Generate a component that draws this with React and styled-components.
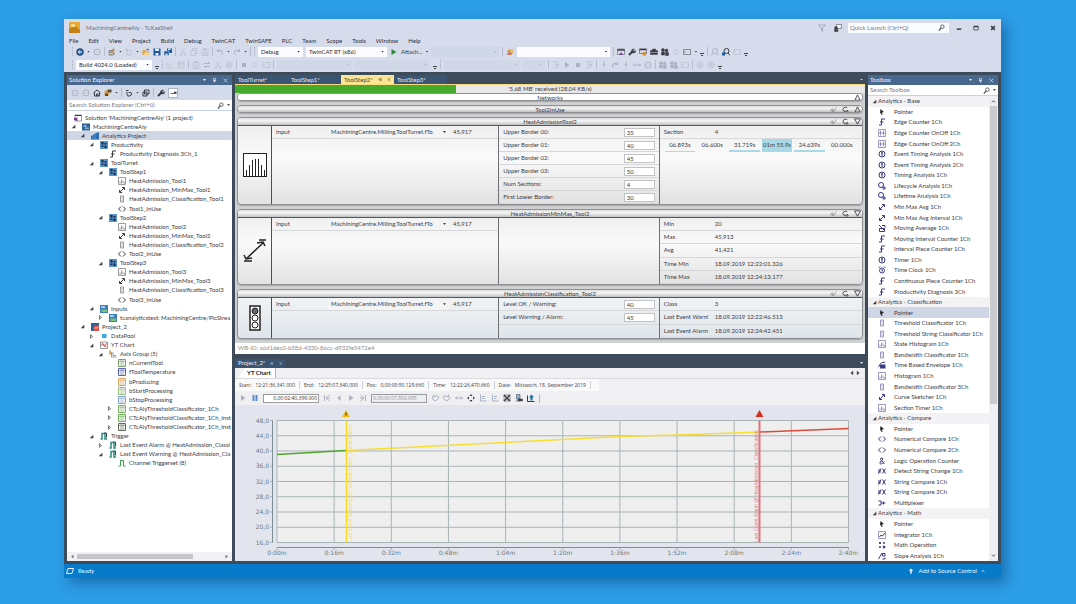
import React, { useState } from "react";
import styled, { createGlobalStyle } from "styled-components";

const GlobalStyle = createGlobalStyle`
  * {
    box-sizing: border-box;
  }

  body {
    margin: 0;
    background: #2c9de7;
    color: #3c3c44;
    font-family: Lato, "Segoe UI", sans-serif;
    font-size: 6px;
    line-height: 8px;
  }

  button, input, select {
    margin: 0;
    padding: 0;
    border: none;
    background: none;
    color: inherit;
    font: inherit;
  }

  input::placeholder {
    color: #77777f;
    opacity: 1;
  }
`;

const Page = styled.div`
  display: flex;
  min-height: 100vh;
  padding: 19px 75px 26px 64px;
`;

const Window = styled.div`
  flex: 1;
  min-width: 0;
  display: flex;
  flex-direction: column;
  background: #3e4b5b;
  box-shadow: 5px 5px 12px rgba(0, 40, 90, 0.4);
`;

const Header = styled.header`
  display: flex;
  flex-direction: column;
  background: #d6dceb;
  padding: 0 4px 1px;
`;

const TitleBar = styled.div`
  display: flex;
  align-items: center;
  gap: 6px;
  height: 17px;
  padding-left: 1px;
`;

const AppTitle = styled.h1`
  flex: 1;
  margin: 0;
  font-size: 6px;
  font-weight: 400;
  color: #6e7079;
`;

const TitleIcons = styled.div`
  display: flex;
  gap: 8px;
`;

const QuickLaunch = styled.label`
  display: flex;
  align-items: center;
  width: 101px;
  height: 10px;
  padding: 0 4px 0 2px;
  background: #fafbfd;
  color: #555;
`;

const BareInput = styled.input`
  flex: 1;
  min-width: 0;
  outline: none;
`;

const WindowButtons = styled.div`
  display: flex;
  gap: 9px;
`;

const Menu = styled.nav`
  display: flex;
  gap: 10px;
  height: 9px;
  align-items: center;
  padding-left: 1px;
`;

const MenuLink = styled.a`
  color: #2e2e36;
  text-decoration: none;
`;

const ToolRow = styled.div`
  display: flex;
  align-items: center;
  gap: 3px;
  height: 13px;
  padding-left: 4px;
`;

const ToolButton = styled.button`
  display: flex;
  align-items: center;
  justify-content: center;
  width: 8px;
  height: 10px;
  color: ${({ $off }) => ($off ? "#aab2c2" : "#3b3b44")};
`;

const BoxedButton = styled(ToolButton)`
  width: 10px;
  background: #fff;
  border: 1px solid #a9b4c9;
`;

const Caret = styled.span`
  flex: none;
  width: 3px;
  height: 2px;
  background: currentColor;
  clip-path: polygon(0 0, 100% 0, 50% 100%);
`;

const Separator = styled.span`
  width: 1px;
  height: 9px;
  background: #b5bccd;
`;

const Grip = styled.span`
  width: 1px;
  height: 9px;
  background: repeating-linear-gradient(#a3abbd 0 1px, transparent 1px 2px);
`;

const Overflow = styled.span`
  width: 4px;
  height: 3px;
  align-self: flex-end;
  margin-bottom: 2px;
  border-top: 1px solid #444;
  background: linear-gradient(#444, #444) center bottom / 2px 1px no-repeat;
`;

const SelectBox = styled.span`
  display: flex;
  align-items: center;
  width: ${({ $width }) => $width}px;
  height: 10px;
  padding: 0 3px;
  background: ${({ $off }) => ($off ? "#d0d8e7" : "#fcfcfe")};
  color: ${({ $off }) => ($off ? "#a9b0bf" : "#2e2e36")};
`;

const NativeSelect = styled.select`
  flex: 1;
  min-width: 0;
  appearance: none;
  outline: none;
`;

const Workspace = styled.div`
  flex: 1;
  display: grid;
  grid-template-columns: 165px minmax(0, 1fr) 130px;
  gap: 3px;
  padding: 3px;
`;

const Dock = styled.section`
  display: flex;
  flex-direction: column;
  min-width: 0;
  background: #fff;
`;

const DockTitle = styled.div`
  display: flex;
  align-items: center;
  gap: 6px;
  height: 10px;
  padding: 0 4px 0 2px;
  background: #49688e;
  color: #f2f5fa;
`;

const DockName = styled.h2`
  flex: 1;
  margin: 0;
  font-size: 6px;
  font-weight: 400;
`;

const DockTools = styled(ToolRow)`
  height: 15px;
  background: #d3dae9;
`;

const SearchBox = styled.label`
  display: flex;
  align-items: center;
  gap: 3px;
  height: 11px;
  padding: 0 2px;
  background: #fff;
  border-bottom: 1px solid #cbd3e2;
  color: #555;
`;

const Tree = styled.ul`
  display: grid;
  grid-auto-rows: 1fr;
  height: 355px;
  margin: 2px 0 0;
  padding: 0;
  list-style: none;
`;

const TreeItem = styled.li`
  display: flex;
  align-items: center;
  padding-left: ${({ $depth }) => ($depth ? $depth * 9 - 5 : 7)}px;
  background: ${({ $selected }) => ($selected ? "#cfd6e5" : "transparent")};
  white-space: nowrap;
`;

const Twisty = styled.span`
  display: flex;
  width: 11px;
  flex: none;
`;

const TreeIcon = styled.span`
  display: flex;
  flex: none;
  width: 8px;
  margin-right: 3px;
  color: ${({ $color }) => $color || "#3c3c44"};
`;

const HScroll = styled.div`
  display: flex;
  align-items: center;
  justify-content: space-between;
  gap: 2px;
  height: 9px;
  margin-top: auto;
  padding: 0 3px;
  background: #f2f2f4;
  color: #666;
`;

const HThumb = styled.span`
  width: 116px;
  height: 5px;
  margin-right: auto;
  background: #c6c7ca;
`;

const ToolboxBody = styled.div`
  flex: 1;
  display: flex;
`;

const ToolList = styled.ul`
  flex: 1;
  min-width: 0;
  display: grid;
  grid-auto-rows: 1fr;
  margin: 0;
  padding: 0;
  list-style: none;
`;

const ToolGroup = styled.li`
  display: flex;
  align-items: center;
  gap: 1px;
  padding-left: 4px;
  background: #f3f3f6;
`;

const ToolItem = styled.li`
  display: flex;
  align-items: center;
  gap: 8px;
  padding-left: 10px;
  background: ${({ $selected }) => ($selected ? "#cfd6e5" : "transparent")};
  white-space: nowrap;
`;

const VScroll = styled.div`
  display: flex;
  flex-direction: column;
  align-items: center;
  gap: 2px;
  width: 9px;
  padding: 3px 0;
  background: #f0f0f2;
  color: #555;
`;

const VThumb = styled.span`
  width: 7px;
  height: 298px;
  margin-bottom: auto;
  background: #cbcbce;
`;

const Center = styled.main`
  display: flex;
  flex-direction: column;
  min-width: 0;
`;

const Tabs = styled.div`
  display: flex;
  align-items: center;
  height: 10px;
  padding-right: 2px;
  border-bottom: ${({ $line }) => ($line ? "1px solid #f6dc7c" : "none")};
  color: #e6ebf2;
`;

const Tab = styled.button`
  display: flex;
  align-items: center;
  gap: 5px;
  width: ${({ $width }) => $width}px;
  height: 9px;
  padding: 0 3px;
  background: ${({ $active }) => ($active ? "#fbe696" : "#3b5472")};
  color: ${({ $active }) => ($active ? "#4d4630" : "#e6ebf2")};
`;

const Spacer = styled.span`
  flex: 1;
`;

const Editor = styled.div`
  background: #e3e4e6;
`;

const Progress = styled.div`
  display: grid;
  height: 8px;
  background: #e8e8e8;
  text-align: center;

  > * {
    grid-area: 1 / 1;
  }
`;

const ProgressFill = styled.span`
  background: #46ab2d;
`;

const Cards = styled.div`
  display: flex;
  flex-direction: column;
  gap: 4px;
  padding: 0 2px 4px;
  background: #d0d1d2;
`;

const Card = styled.section`
  border: 1px solid #8f9194;
  border-radius: 4px;
  background: ${({ $blue }) =>
    $blue
      ? "linear-gradient(#f4f6f8, #dfe5ea)"
      : "linear-gradient(#ececec, #fafafa 45%, #e2e2e2)"};
  box-shadow: 0 1px 1px #a5a6a8;
  overflow: hidden;
`;

const CardHead = styled.div`
  display: grid;
  grid-template-columns: 1fr auto 1fr;
  align-items: center;
  height: ${({ $open }) => ($open ? 8 : 6)}px;
  border-bottom: ${({ $open }) => ($open ? "1px solid #55575a" : "none")};
  background: ${({ $plain }) =>
    $plain ? "#fff" : "linear-gradient(#dcdcdc, #f6f6f6 40%, #bfc0c2)"};
  line-height: 6px;
`;

const CardName = styled.span`
  grid-column: 2;
`;

const CardActions = styled.span`
  display: flex;
  justify-content: flex-end;
  gap: 5px;
  padding-right: 1px;
`;

const CardBody = styled.div`
  display: grid;
  grid-template-columns: 34px minmax(0, 228fr) minmax(0, 161fr) minmax(0, 203fr);
  min-height: ${({ $height }) => $height}px;
`;

const IconCell = styled.div`
  display: flex;
  align-items: center;
  justify-content: center;
  border-right: 1px solid #4d4f52;
`;

const Column = styled.div`
  display: grid;
  grid-template-rows: repeat(${({ $rows }) => $rows}, 1fr);
  border-right: ${({ $last }) => ($last ? "none" : "1px solid #6d6f72")};
`;

const Row = styled.div`
  display: grid;
  grid-template-columns: ${({ $cols }) => $cols};
  align-items: center;
  padding: 0 4px;
  border-bottom: 1px solid #d6d7d9;
  white-space: nowrap;
`;

const LabelRow = styled(Row).attrs({ as: "label" })``;

const SourceSelect = styled.span`
  display: flex;
  align-items: center;
  gap: 2px;
  height: 11px;
  margin-right: 4px;
  padding: 0 3px;
  background: #f4f4f5;
`;

const NumberBox = styled.input`
  height: 9px;
  padding: 0 2px;
  border: 1px solid #c2c3c6;
  background: #fff;
  outline: none;
`;

const Timings = styled.div`
  display: grid;
  grid-template-columns: repeat(6, 1fr);
  align-items: stretch;
  padding: 0 4px;
  text-align: center;
`;

const Timing = styled.span`
  margin: 0 1px;
  line-height: 11px;
  border-bottom: ${({ $level }) => $level}px solid #a9d9e6;
  background: ${({ $full }) => ($full ? "#a9d9e6" : "transparent")};
`;

const WorkbenchId = styled.div`
  height: 11px;
  padding: 1px 3px;
  background: #fff;
  color: #8b8c92;
`;

const ChartDock = styled.section`
  display: flex;
  flex-direction: column;
  flex: 1;
  margin-top: 4px;
`;

const ChartPanel = styled.div`
  flex: 1;
  display: flex;
  flex-direction: column;
  background: #e2e5ed;
`;

const ChartTabs = styled.div`
  display: flex;
  align-items: center;
  height: 11px;
  padding: 0 4px;
  background: #f0f0f2;
  border-bottom: 1px solid #dadbe0;
`;

const ChartTab = styled.button`
  height: 10px;
  padding: 0 4px 0 8px;
  background: linear-gradient(125deg, transparent 5px, #fff 5px);
  border-right: 1px solid #b4b5ba;
  color: #222;
  font-weight: 700;
`;

const InfoBar = styled.dl`
  display: flex;
  align-self: flex-start;
  height: 12px;
  margin: 0;
  padding: 2px 4px;
  background: #fafafb;
  font-family: "Open Sans", sans-serif;
  font-size: 5px;
`;

const Info = styled.div`
  display: flex;
  gap: 4px;
  padding-right: 4px;
  margin-right: 4px;
  border-right: 1px solid #d0d1d6;

  dd {
    margin: 0;
  }
`;

const InfoArea = styled.div`
  display: flex;
  flex-direction: column;
  background: #f0f0f2;
`;

const PlayBar = styled(ToolRow)`
  gap: 4px;
  height: 14px;
`;

const TimeInput = styled.input`
  width: 56px;
  height: 9px;
  padding: 0 1px;
  border: 1px solid #9b9ca2;
  background: ${({ $off }) => ($off ? "#ededef" : "#fff")};
  color: ${({ $off }) => ($off ? "#98989e" : "#333")};
  font-family: "Open Sans", sans-serif;
  font-size: 5px;
  text-align: ${({ $off }) => ($off ? "left" : "right")};
`;

const ChartSvg = styled.svg`
  display: block;
  width: 100%;
  font-family: "DejaVu Sans", sans-serif;
  font-size: 6px;
`;

const StatusBar = styled.footer`
  display: flex;
  align-items: center;
  gap: 4px;
  height: 14px;
  padding: 0 16px 0 2px;
  background: #077bc9;
  color: #eaf4fc;
`;

const SourceControl = styled.button`
  display: flex;
  align-items: center;
  gap: 4px;
`;

const NAVY = "#3a3a86";
const BLUE = "#1b5a9e";

// every glyph is drawn on a 16 x 16 grid
const glyphs = {
  back: <><circle cx="8" cy="8" r="7" fill={BLUE} /><path d="M12 8H5M8 4.5L4.5 8L8 11.5" stroke="#fff" strokeWidth="2" fill="none" /></>,
  round: <><circle cx="8" cy="8" r="6" fill="none" strokeWidth="2" /><path d="M5 8h6" /></>,
  newProject: <><path d="M2 5h8v9H2zM2 8h8M6 5v9" fill="#f4e6c8" /><path d="M11 1v6M8 4h6" stroke="#c98a2b" strokeWidth="2" /><path d="M12 9v5" /></>,
  addItem: <><path d="M4 5h8v9H4z" fill="none" /><path d="M3 0v6M0 3h6" /></>,
  open: <><path d="M1 4h5l2 2h5v8H1z" fill="#dca64b" stroke="none" /><path d="M3 14l3-6h10l-3 6z" fill="#f2cf86" stroke="none" /><path d="M9 3q4-3 4 2" stroke={BLUE} strokeWidth="2" fill="none" /></>,
  save: <><path d="M1 1h14v14H1z" fill={BLUE} stroke="none" /><path d="M4 1h8v5H4zM5 10h6v5H5z" fill="#dfe7f3" stroke="none" /></>,
  saveAll: <><path d="M6 1h10v9H6z" fill={BLUE} stroke="none" /><path d="M8 1h5v3H8z" fill="#dfe7f3" stroke="none" /><path d="M0 6h10v9H0z" fill={BLUE} stroke="#d6dceb" /><path d="M3 11h4v4H3z" fill="#dfe7f3" stroke="none" /></>,
  cut: <><path d="M4 1l7 10M12 1L5 11" /><circle cx="4" cy="13" r="2" fill="none" /><circle cx="12" cy="13" r="2" fill="none" /></>,
  copy: <><path d="M5 1h9v10H5z" fill="none" /><path d="M2 5h9v10H2z" fill="#d6dceb" /></>,
  paste: <><path d="M2 3h12v12H2z" fill="none" /><path d="M6 1h4v3H6zM6 8h5v5H6z" /></>,
  undo: <path d="M3 2v5h5M3 7q5-5 9-1t-2 8" fill="none" strokeWidth="2" />,
  redo: <path d="M13 2v5H8M13 7q-5-5-9-1t2 8" fill="none" strokeWidth="2" />,
  play: <path d="M4 2l9 6l-9 6z" fill="currentColor" stroke="none" />,
  playGreen: <path d="M3 2l10 6l-10 6z" fill="#2f8a37" stroke="none" />,
  find: <><path d="M1 8l4-5h4l-1 6z" fill="#e2983a" stroke="none" /><path d="M8 2h7v7H8z" fill="#eebb62" stroke="none" /><path d="M2 14h9l3-5H5z" fill="#dc8d34" stroke="none" /><path d="M3 13l6-4" stroke="#9a6bb0" strokeWidth="3" /></>,
  winPurple: <><path d="M1 2h14v11H1z" fill="none" /><path d="M1 4h14" strokeWidth="3" /><path d="M4 14l4-6l4 6z" fill="#7b3f99" stroke="none" /></>,
  winOrange: <><path d="M1 2h14v9H1z" fill="none" /><path d="M1 3h14" strokeWidth="3" /><path d="M7 8h7v7H7z" fill="#de8f30" stroke="none" /></>,
  wrench: <><path d="M2 14l7-7" strokeWidth="4" /><path d="M13 2l-3 3l2 2l3-2q1 5-4 5t-4-5q1-4 6-3z" fill="currentColor" /></>,
  toolbox: <><path d="M1 5h14v8H1zM5 5V2h6v3" fill="currentColor" /><path d="M1 9h14" stroke="#d6dceb" /></>,
  team: <><circle cx="4" cy="4" r="3" fill="currentColor" /><circle cx="11" cy="5" r="3" fill="currentColor" /><path d="M1 14V8h6v6zM9 15V9h6v6z" fill="currentColor" /></>,
  frame: <><path d="M1 3h14v10H1z" fill="none" /><path d="M4 6v4" /></>,
  dots: <path d="M2 8h2M7 8h2M12 8h2M4 4h8M4 12h8" />,
  lens: <><circle cx="8" cy="6" r="5" fill="none" strokeWidth="2" /><path d="M4 10l-3 5M11 10l4 5" strokeWidth="2" /></>,
  lensBlue: <><circle cx="9" cy="6" r="5" fill="none" strokeWidth="2" /><path d="M12 10l4 5M6 9l-2 3" strokeWidth="2" /><path d="M0 9h6v6H0z" fill={BLUE} stroke="none" /></>,
  grid: <path d="M2 2h12v12H2zM2 6h12M6 2v12" fill="none" />,
  lines: <path d="M2 2v12h12M5 11l8-8M5 5l4 4" fill="none" />,
  swap: <path d="M2 5h11l-3-3M14 11H3l3 3" fill="none" strokeWidth="2" />,
  globe: <><circle cx="8" cy="8" r="6" fill="none" /><path d="M2 8h12M8 2v12" /></>,
  step: <path d="M1 2h9v12H1M5 8h9M11 5l3 3l-3 3" fill="none" />,
  stop: <path d="M4 4h8v8H4z" fill="currentColor" stroke="none" />,
  down: <path d="M8 1v9M5 7l3 3l3-3M7 14h2" fill="none" strokeWidth="2" />,
  magnify: <><circle cx="10" cy="6" r="4" fill="none" strokeWidth="2" /><path d="M7 9l-5 6" strokeWidth="3" /></>,
  filter: <path d="M1 2h14L9 9v6l-2-2V9z" fill="none" />,
  feedback: <><path d="M5 1h10v8H5z" fill="#eef1f7" /><circle cx="4" cy="8" r="3" fill="currentColor" /><path d="M1 15v-4h7v4z" fill="currentColor" /></>,
  min: <path d="M2 11h12" strokeWidth="4" />,
  max: <><path d="M2 4h12v9H2z" fill="none" strokeWidth="2" /><path d="M2 4h12" strokeWidth="4" /></>,
  close: <path d="M2 2l12 12M14 2L2 14" strokeWidth="2" />,
  closeBold: <path d="M3 3l10 10M13 3L3 13" strokeWidth="4" />,
  pin: <path d="M5 1h6v8H5zM3 9h10M8 9v6" fill="none" strokeWidth="2" />,
  tabPin: <path d="M1 8h6M7 4v8h6V4z" fill="none" strokeWidth="2" />,
  home: <path d="M1 8l7-6l7 6M3 7v7h10V7M7 14v-4h3v4" fill="none" strokeWidth="2" />,
  folders: <><path d="M1 3h9v10H1z" fill="#dda64a" stroke="none" /><path d="M7 1h8v6H7zM2 9h6v5H2z" fill="#5a4a3a" stroke="none" /></>,
  sync: <path d="M2 3h5M4 6v5q0 4 5 3t4-6q-3-3-6 0" fill="none" strokeWidth="2" />,
  stack: <path d="M5 2h9v8H5zM2 6h8v8H2z" fill="none" strokeWidth="2" />,
  bar: <path d="M1 9h8V6h6v5H1z" fill="currentColor" stroke="none" />,
  open4: <path d="M11 2v10H1z" fill="currentColor" stroke="none" />,
  closed4: <path d="M3 2l6 5l-6 5z" fill="none" strokeWidth="2" />,
  solution: <><path d="M2 2h13v12H2z" fill="#fff" /><path d="M2 3h13" strokeWidth="2" /><path d="M0 8l7-1v7l-7-2z" fill="#7b3f99" stroke="none" /></>,
  machine: <><path d="M0 1h16v14H0z" fill="#2e5f96" stroke="none" /><path d="M3 4h6v4H3zM6 9h8v3H6z" fill="#8fb4d6" stroke="none" /></>,
  analytics: <><path d="M0 15V8l4-2l4-3l8-3v15z" fill="#2a6fb8" stroke="none" /><path d="M4 6v9M8 4v11" stroke="#7fb0dd" /></>,
  module: <><path d="M0 0h16v16H0z" fill="#5a94c9" stroke="none" /><path d="M3 2h4v5H3zM9 4h4v3H9zM3 9h4v3H3zM9 9h4v5H9z" fill="#14284a" stroke="none" /></>,
  inputs: <><path d="M0 0h16v16H0z" fill="#3c7fc0" stroke="none" /><path d="M3 9h11v5H3z" fill="#7fc46a" stroke="none" /><path d="M2 2h8v4H2z" fill="#a8cbe6" stroke="none" /></>,
  edge: <path d="M2 14h5V2h7M4 8h7" fill="none" strokeWidth="2" />,
  hist: <><path d="M1 1h14v14H1z" fill="none" /><path d="M4 13V9M7 13V5M10 13V7M13 13v-3" /></>,
  minmax: <path d="M4 12L12 4M8 3h5v5M3 8v5h5" fill="none" strokeWidth="2" />,
  lamp: <path d="M5 2h6v12H5zM7 5h2M7 8h2M7 11h2" fill="none" />,
  compare: <path d="M6 3L1 8l5 5M10 3l5 5l-5 5" fill="none" strokeWidth="2" />,
  project2: <><path d="M0 0h16v16H0z" fill="#2e5f96" stroke="none" /><path d="M5 5h11v11H5z" fill="#d9534a" stroke="none" /><path d="M7 12l3-4l2 3l3-4" stroke="#fff" fill="none" /></>,
  pool: <path d="M4 4h9v8H4z" fill="#35a9e0" stroke="none" />,
  ytChart: <><path d="M1 2h14v13H1z" fill="#fff" /><path d="M1 10l4-4l4 5l5-7M3 3l10 9" stroke="#d9534a" fill="none" strokeWidth="2" /></>,
  axis: <><path d="M5 4v10h10M8 4v7h6" fill="none" /><path d="M2 1v8" stroke="#e08a3a" strokeWidth="3" /></>,
  channel: <><path d="M1 1h14v14H1z" fill="#eef1ee" strokeWidth="2" /><path d="M1 5h14M6 2v12M10 2v12" /></>,
  trigger: <><path d="M1 14h3V3h6v11h4" fill="none" stroke="#2b8f7f" strokeWidth="3" /><path d="M8 2h5v9" fill="none" stroke="#3b4a5e" strokeWidth="2" /></>,
  pulse: <path d="M1 14h4V3h6v11h4" fill="none" stroke="#35a545" strokeWidth="2" />,
  pointer: <path d="M5 2l7 6l-4 1l1 5l-2 0l-1-4l-2 1z" fill="#222" stroke="none" />,
  onoff: <><path d="M1 1h14v14H1z" fill="none" /><path d="M5 3v10M11 3v10M2 8h12" /></>,
  clock: <><circle cx="8" cy="8" r="6" fill="none" strokeWidth="2" /><path d="M8 4v8M6 6h4" strokeWidth="2" /></>,
  cycle: <><circle cx="6" cy="6" r="5" fill="none" strokeWidth="2" /><path d="M10 10h4v4h-4z" fill="none" strokeWidth="2" /></>,
  moving: <><path d="M2 2l12 12M3 9v6h10V9z" fill="none" strokeWidth="2" /><path d="M8 3h6v4" fill="none" strokeWidth="2" /></>,
  alarmClock: <><circle cx="8" cy="9" r="5" fill="none" strokeWidth="2" /><path d="M1 4l3-3M15 4l-3-3M8 6v4h2" strokeWidth="2" /></>,
  envelope: <><path d="M4 7h11v8H4z" fill="currentColor" stroke="none" /><path d="M1 12Q6 0 14 3" fill="none" strokeWidth="2" /></>,
  amp: <path d="M13 14L5 5q0-4 3-3t0 5q-6 3-4 6t9-4" fill="none" strokeWidth="2" />,
  notEqual: <path d="M0 6h6M0 10h6M1 13L6 3M9 3l6 10M15 3L9 13" fill="none" strokeWidth="2" />,
  mux: <path d="M1 4h5v8H1M6 8h9M11 5v6" fill="none" strokeWidth="2" />,
  integ: <><path d="M1 1h14v14H1z" fill="none" /><path d="M3 12l3-4l3 2l5-6" fill="none" strokeWidth="2" /></>,
  math: <path d="M2 4h4M4 2v4M10 4h4M2 12h4M10 10l4 4M14 10l-4 4" strokeWidth="3" />,
  slope: <path d="M1 14L8 2M9 3h5v5H9zM9 14h5v-3" fill="none" strokeWidth="2" />,
  pen: <path d="M1 12q2-6 5-6t-1 6h4L15 3" fill="none" />,
  reset: <path d="M12 4Q8 1 4 4t0 8h7v3l3-3l-3-3" fill="none" strokeWidth="2" />,
  triUp: <path d="M2 14L8 2l6 12z" fill="none" strokeWidth="2" />,
  triDown: <path d="M1 2l7 12l7-12z" fill="none" strokeWidth="2" />,
  pause: <path d="M3 2h4v12H3zM9 2h4v12H9z" fill="#5b86d0" stroke="none" />,
  first: <path d="M3 2v12M13 2L6 8l7 6M8 8h6" fill="none" strokeWidth="2" />,
  prev: <path d="M11 2L5 8l6 6z" fill="currentColor" stroke="none" />,
  last: <path d="M13 2v12M3 2l7 6l-7 6M2 8h6" fill="none" strokeWidth="2" />,
  ccw: <path d="M5 3q-5 5 0 9t9-2t-4-8M5 1v4h5" fill="none" strokeWidth="2" />,
  cw: <path d="M11 3q5 5 0 9T2 10t4-8M11 1v4H6" fill="none" strokeWidth="2" />,
  hfit: <path d="M1 8h14M4 5L1 8l3 3M12 5l3 3l-3 3" fill="none" strokeWidth="2" />,
  move: <path d="M8 0l3 4H5zM8 16l3-4H5zM0 8l4-3v6zM16 8l-4-3v6z" fill="currentColor" stroke="none" />,
  axisFit: <path d="M3 1v13h12M6 5h6M6 9h5" fill="none" strokeWidth="2" />,
  crossFit: <><path d="M2 2h12v12H2z" fill="none" /><path d="M2 2l12 12M14 2L2 14" strokeWidth="3" /></>,
  report: <><path d="M3 1h7v9H3z" fill="#8db8dd" /><path d="M6 10h9v4H6z" fill="currentColor" /><path d="M1 14h8" /></>,
  exportUp: <><path d="M1 3v12h14" fill="none" strokeWidth="2" /><path d="M7 13V7H4l5-6l5 6h-3v6z" fill="#1d6f99" stroke="none" /></>,
  arrowUp: <path d="M8 1l6 6h-4v8H6V7H2z" fill="currentColor" stroke="none" />,
  flag: <path d="M4 3h11l-3 10H1z" fill="none" strokeWidth="2" />,
  scrollL: <path d="M11 2L4 8l7 6z" fill="currentColor" stroke="none" />,
  scrollR: <path d="M5 2l7 6l-7 6z" fill="currentColor" stroke="none" />,
  scrollU: <path d="M3 11l5-6l5 6" fill="none" strokeWidth="3" />,
  scrollD: <path d="M3 5l5 6l5-6" fill="none" strokeWidth="3" />,
};

const Icon = ({ name, size = 8, color }) => (
  <svg
    width={size}
    height={size}
    viewBox={name.endsWith("4") ? "0 0 12 14" : "0 0 16 16"}
    stroke="currentColor"
    fill="none"
    color={color}
    aria-hidden="true"
  >
    {glyphs[name]}
  </svg>
);

// "|" is a separator, ":" a grip, "v" a drop-down caret, "..." the overflow mark
const Tools = ({ items, off }) =>
  items.split(" ").map((item, i) => {
    if (item === "|") return <Separator key={i} />;
    if (item === ":") return <Grip key={i} />;
    if (item === "v") return <Caret key={i} />;
    if (item === "...") return <Overflow key={i} />;
    return (
      <ToolButton key={i} type="button" aria-label={item} $off={off}>
        <Icon name={item} />
      </ToolButton>
    );
  });

const ToolSelect = ({ label, value, width, off }) => (
  <SelectBox $width={width} $off={off}>
    <NativeSelect aria-label={label} disabled={off} defaultValue={value}>
      <option>{value}</option>
    </NativeSelect>
    <Caret />
  </SelectBox>
);

const menu = ["File", "Edit", "View", "Project", "Build", "Debug", "TwinCAT", "TwinSAFE", "PLC", "Team", "Scope", "Tools", "Window", "Help"];

const toolStep = (n) => [
  [4, "open", "module", `ToolStep${n}`],
  [5, "", "hist", `HeatAdmission_Tool${n}`],
  [5, "", "minmax", `HeatAdmission_MinMax_Tool${n}`],
  [5, "", "lamp", `HeatAdmission_Classification_Tool${n}`],
  [5, "", "compare", `Tool${n}_InUse`],
];

const tree = [
  [0, "", "solution", "Solution 'MachiningCentreAly' (1 project)"],
  [1, "open", "machine", "MachiningCentreAly"],
  [2, "open", "analytics", "Analytics Project"],
  [3, "open", "module", "Productivity"],
  [4, "", "edge", "Productivity Diagnosis 3Ch_1"],
  [3, "open", "module", "ToolTurret"],
  ...toolStep(1),
  ...toolStep(2),
  ...toolStep(3),
  [3, "open", "inputs", "Inputs"],
  [4, "closed", "inputs", "tcanalyticstest: MachiningCentre/PlcStrea"],
  [2, "open", "project2", "Project_2"],
  [3, "closed", "pool", "DataPool"],
  [3, "open", "ytChart", "YT Chart"],
  [4, "open", "axis", "Axis Group (5)"],
  [5, "", "channel", "nCurrentTool", "#7fa06a"],
  [5, "", "channel", "fToolTemperature", "#5664a8"],
  [5, "", "channel", "bProducing", "#dda760"],
  [5, "", "channel", "bStartProcessing", "#9bbf7c"],
  [5, "", "channel", "bStopProcessing", "#86a8d6"],
  [5, "closed", "channel", "CTcAlyThresholdClassificator_1Ch", "#7fb06a"],
  [5, "closed", "channel", "CTcAlyThresholdClassificator_1Ch_Inst", "#6fae55"],
  [5, "closed", "channel", "CTcAlyThresholdClassificator_1Ch_Inst", "#5d6b58"],
  [3, "open", "trigger", "Trigger"],
  [4, "closed", "trigger", "Last Event Alarm @ HeatAdmission_Classi"],
  [4, "open", "trigger", "Last Event Warning @ HeatAdmission_Cla"],
  [5, "", "pulse", "Channel Triggerset (8)"],
];

const toolbox = [
  ["Analytics - Base", [
    ["pointer", "Pointer"],
    ["edge", "Edge Counter 1Ch"],
    ["onoff", "Edge Counter OnOff 1Ch"],
    ["onoff", "Edge Counter OnOff 2Ch"],
    ["clock", "Event Timing Analysis 1Ch"],
    ["clock", "Event Timing Analysis 2Ch"],
    ["clock", "Timing Analysis 1Ch"],
    ["cycle", "Lifecycle Analysis 1Ch"],
    ["cycle", "Lifetime Analysis 1Ch"],
    ["minmax", "Min Max Avg 1Ch"],
    ["minmax", "Min Max Avg Interval 1Ch"],
    ["moving", "Moving Average 1Ch"],
    ["edge", "Moving Interval Counter 1Ch"],
    ["edge", "Interval Piece Counter 1Ch"],
    ["clock", "Timer 1Ch"],
    ["alarmClock", "Time Clock 1Ch"],
    ["edge", "Continuous Piece Counter 1Ch"],
    ["edge", "Productivity Diagnosis 3Ch"],
  ]],
  ["Analytics - Classification", [
    ["pointer", "Pointer", true],
    ["lamp", "Threshold Classificator 1Ch"],
    ["lamp", "Threshold String Classificator 1Ch"],
    ["hist", "State Histogram 1Ch"],
    ["lamp", "Bandwidth Classificator 1Ch"],
    ["envelope", "Time Based Envelope 1Ch"],
    ["hist", "Histogram 1Ch"],
    ["lamp", "Bandwidth Classificator 3Ch"],
    ["minmax", "Curve Sketcher 1Ch"],
    ["hist", "Section Timer 1Ch"],
  ]],
  ["Analytics - Compare", [
    ["pointer", "Pointer"],
    ["compare", "Numerical Compare 1Ch"],
    ["compare", "Numerical Compare 2Ch"],
    ["amp", "Logic Operation Counter"],
    ["notEqual", "Detect String Change 1Ch"],
    ["notEqual", "String Compare 1Ch"],
    ["notEqual", "String Compare 2Ch"],
    ["mux", "Multiplexer"],
  ]],
  ["Analytics - Math", [
    ["pointer", "Pointer"],
    ["integ", "Integrator 1Ch"],
    ["math", "Math Operation"],
    ["slope", "Slope Analysis 1Ch"],
  ]],
];

const timings = [
  ["06.893s", 1],
  ["06.600s", 0],
  ["31.719s", 2],
  ["01m 55.9s", 2, true],
  ["24.639s", 2],
  ["00.000s", 0],
];

const info = [
  ["Start:", "12:21:36,341.000"],
  ["End:", "12:25:07,340.000"],
  ["Pos:", "0,00:00:50.129.660"],
  ["Time:", "12:22:26,470.660"],
  ["Date:", "Mittwoch, 18. September 2019"],
];

const DockHeader = ({ title }) => (
  <DockTitle>
    <DockName>{title}</DockName>
    <Caret />
    <Icon name="pin" size={5} />
    <Icon name="close" size={5} />
  </DockTitle>
);

const Search = ({ text }) => (
  <SearchBox>
    <BareInput type="search" placeholder={text} aria-label={text} />
    <Icon name="magnify" size={7} />
    <Caret />
  </SearchBox>
);

const SolutionExplorer = () => (
  <Dock>
    <DockHeader title="Solution Explorer" />
    <DockTools>
      <Tools items="round round" off />
      <Tools items="home folders v | sync v stack | wrench" />
      <BoxedButton type="button" aria-label="Preview">
        <Icon name="bar" size={7} />
      </BoxedButton>
    </DockTools>
    <Search text="Search Solution Explorer (Ctrl+ü)" />
    <Tree>
      {tree.map(([depth, state, icon, text, color], i) => (
        <TreeItem key={i} $depth={depth} $selected={i === 2}>
          {depth > 0 && (
            <Twisty>{state && <Icon name={`${state}4`} size={5} />}</Twisty>
          )}
          <TreeIcon $color={color}>
            <Icon name={icon} />
          </TreeIcon>
          {text}
        </TreeItem>
      ))}
    </Tree>
    <HScroll>
      <Icon name="scrollL" size={5} />
      <HThumb />
      <Icon name="scrollR" size={5} />
    </HScroll>
  </Dock>
);

const Toolbox = () => (
  <Dock>
    <DockHeader title="Toolbox" />
    <Search text="Search Toolbox" />
    <ToolboxBody>
      <ToolList>
        {toolbox.map(([group, items]) => (
          <React.Fragment key={group}>
            <ToolGroup>
              <Icon name="open4" size={5} />
              {group}
            </ToolGroup>
            {items.map(([icon, text, selected]) => (
              <ToolItem key={text} $selected={selected}>
                <Icon name={icon} color={NAVY} />
                {text}
              </ToolItem>
            ))}
          </React.Fragment>
        ))}
      </ToolList>
      <VScroll>
        <Icon name="scrollU" size={5} />
        <VThumb />
        <Icon name="scrollD" size={5} />
      </VScroll>
    </ToolboxBody>
  </Dock>
);

const Head = ({ name, open, plain }) => (
  <CardHead $open={open} $plain={plain}>
    <CardName>{name}</CardName>
    <CardActions>
      {!plain && <Icon name="pen" size={7} />}
      {!plain && <Icon name="reset" size={7} />}
      <Icon name={open ? "triDown" : "triUp"} size={7} />
    </CardActions>
  </CardHead>
);

const InputColumn = ({ rows }) => (
  <Column $rows={rows}>
    <LabelRow $cols="52px 125px 1fr">
      Input
      <SourceSelect>
        <NativeSelect defaultValue="source">
          <option value="source">MachiningCentre.Milling.ToolTurret.fTo</option>
        </NativeSelect>
        <Caret />
      </SourceSelect>
      <span>45,917</span>
    </LabelRow>
  </Column>
);

const FieldColumn = ({ rows, fields }) => (
  <Column $rows={rows}>
    {fields.map(([label, value]) => (
      <LabelRow key={label} $cols="1fr 31px">
        {label}
        <NumberBox defaultValue={value} />
      </LabelRow>
    ))}
  </Column>
);

const ResultRows = ({ results }) =>
  results.map(([label, value]) => (
    <Row key={label} $cols="51px 1fr">
      <span>{label}</span>
      <span>{value}</span>
    </Row>
  ));

const HistogramLogo = () => (
  <svg width="24" height="24" viewBox="0 0 24 24" stroke="#222" fill="none">
    <rect x="0.5" y="0.5" width="23" height="23" fill="#fff" />
    <path d="M3.5 23v-6M6.500 23V12M9.500 23V7M12.500 23V6M15.500 23V6M18.500 23V12M21.500 23v-6" />
  </svg>
);

const MinMaxLogo = () => (
  <svg width="26" height="24" viewBox="0 0 26 24" stroke="#222" fill="none">
    <path d="M4 20L22 3M17 1h7M23 7l-2-4l-6 1M2 22h8M2 16l2 4l6-1" strokeWidth="1.5" />
  </svg>
);

const LampLogo = () => (
  <svg width="12" height="26" viewBox="0 0 12 26" stroke="#222" fill="none">
    <rect x="1" y="1" width="10" height="24" fill="#fff" strokeWidth="1.5" />
    <circle cx="6" cy="6" r="3" fill="#666" />
    <circle cx="6" cy="13" r="3" />
    <circle cx="6" cy="20" r="3" />
  </svg>
);

const xTicks = ["0:00m", "0:16m", "0:32m", "0:48m", "1:04m", "1:20m", "1:36m", "1:52m", "2:08m", "2:24m", "2:40m"];
const yTicks = ["48,0", "44,0", "40,0", "36,0", "32,0", "28,0", "24,0", "20,0", "16,0"];
const xAt = (i) => 42 + i * 57.15;
const yAt = (i) => 15.5 + i * 15.25;

const YtChart = () => (
  <ChartSvg viewBox="0 0 630 156">
    <rect width="630" height="156" fill="#e2e5ed" />
    <rect x="42" y="15" width="572" height="123" fill="#efefef" />
    <g stroke="#a9b4b6" strokeWidth="1">
      {xTicks.map((t, i) => (
        <path key={t} d={`M${xAt(i)} 15.5V137.5M${xAt(i)} 142v3`} />
      ))}
      {yTicks.map((t, i) => (
        <path key={t} d={`M42 ${yAt(i)}H613.5M35 ${yAt(i)}h3`} />
      ))}
      <path d="M37.5 15.5V137.5M42 142.5H613.5" stroke="#7d8d90" />
    </g>
    <g fill="#6d7a80">
      {xTicks.map((t, i) => (
        <text key={t} x={xAt(i)} y="150" textAnchor="middle">{t}</text>
      ))}
      {yTicks.map((t, i) => (
        <text key={t} x="34" y={yAt(i) + 2} textAnchor="end">{t}</text>
      ))}
    </g>
    <path d="M42 49.5L111 45.5" stroke="#4fa52e" strokeWidth="1.5" />
    <path d="M111 45.5L328 34.5L385 31.5L442 30L499 28L525 27" stroke="#f6de35" strokeWidth="1.5" fill="none" />
    <path d="M525 27L613.5 23.5" stroke="#dd4a3a" strokeWidth="1.5" />
    <path d="M111.5 15.5v122" stroke="#f8d91f" strokeWidth="1.5" />
    <path d="M111 5l4 7h-8z" fill="#f0b90e" />
    <path d="M111 7.5v3" stroke="#4d3a05" strokeWidth="1" />
    <text transform="translate(117 137) rotate(-90)" fill="#f3dc6c" fontFamily="Liberation Sans" fontSize="5">
      Last Event Warning @ HeatAdmission_Classification
    </text>
    <path d="M524.5 15.5v122" stroke="#e2707a" strokeWidth="2" />
    <path d="M524.5 5l4 7h-8z" fill="#d8321e" />
    <text transform="translate(523 137) rotate(-90)" fill="#dd7f84" fontFamily="Liberation Sans" fontSize="5">
      Last Event Alarm @ HeatAdmission_Classification
    </text>
  </ChartSvg>
);

const App = () => {
  const [tab, setTab] = useState("ToolStep2*");

  return (
    <>
      <GlobalStyle />
      <Page>
        <Window>
          <Header>
            <TitleBar>
              <svg width="11" height="11" viewBox="0 0 11 11" aria-hidden="true">
                <rect width="11" height="11" fill="#e9a92e" />
                <path d="M0 7l5-4l6 5v3H0z" fill="#c47f16" />
                <path d="M2 2h4v3H2z" fill="#f9dc8a" />
              </svg>
              <AppTitle>MachiningCentreAly - TcXaeShell</AppTitle>
              <TitleIcons>
                <Icon name="filter" color="#777c8c" />
                <Icon name="feedback" />
              </TitleIcons>
              <QuickLaunch>
                <BareInput placeholder="Quick Launch (Ctrl+Q)" />
                <Icon name="magnify" size={7} />
              </QuickLaunch>
              <WindowButtons>
                <ToolButton type="button" aria-label="Minimize"><Icon name="min" size={6} /></ToolButton>
                <ToolButton type="button" aria-label="Maximize"><Icon name="max" size={6} /></ToolButton>
                <ToolButton type="button" aria-label="Close"><Icon name="closeBold" size={6} /></ToolButton>
              </WindowButtons>
            </TitleBar>
            <Menu>
              {menu.map((item) => (
                <MenuLink key={item} href="#">{item}</MenuLink>
              ))}
            </Menu>
            <ToolRow>
              <Tools items=": back v" />
              <Tools items="round" off />
              <Tools items="| newProject v" />
              <Tools items="addItem v" off />
              <Tools items="open save saveAll |" />
              <Tools items="cut copy paste | undo v redo v | :" off />
              <ToolSelect label="Configuration" value="Debug" width={45} />
              <ToolSelect label="Platform" value="TwinCAT RT (x86)" width={81} />
              <Tools items="playGreen" />
              Attach...
              <Caret />
              <ToolSelect label="Target" value="" width={68} off />
              <Tools items="| find" />
              <ToolSelect label="Find" value="" width={93} />
              <Tools items="| winPurple wrench winOrange toolbox team" />
              <Tools items="dots" off />
              <Tools items="frame v ... |" />
              <Tools items="lens" off />
              <Tools items="lensBlue" />
              <Tools items="frame ..." off />
            </ToolRow>
            <ToolRow>
              <Tools items=":" />
              <ToolSelect label="Build version" value="Build 4024.0 (Loaded)" width={76} />
              <Tools items="... : lines grid | paste swap cut globe | stop dots frame |" off />
              <ToolSelect label="Routes" value="" width={75} off />
              <ToolSelect label="Ports" value="" width={75} off />
              <Tools items="... :" />
              <ToolSelect label="Process" value="" width={76} off />
              <ToolSelect label="Thread" value="" width={22} off />
              <Tools items="| step play stop step | down redo down hfit round | team team frame | globe globe ..." off />
            </ToolRow>
          </Header>

          <Workspace>
            <SolutionExplorer />
            <Center>
              <Tabs $line>
                {["ToolTurret*", "ToolStep1*", "ToolStep2*", "ToolStep3*"].map((name) => (
                  <Tab key={name} type="button" $width={53} $active={tab === name} onClick={() => setTab(name)}>
                    {name}
                    {tab === name && <Icon name="tabPin" size={5} />}
                    {tab === name && <Icon name="close" size={5} />}
                  </Tab>
                ))}
                <Spacer />
                <Caret />
              </Tabs>
              <Editor>
                <Progress>
                  <ProgressFill style={{ width: "35%" }} />
                  <span>'5,68 MB' received (28,04 KB/s)</span>
                </Progress>
                <Cards>
                  <Card>
                    <Head name="Networks" plain />
                  </Card>
                  <Card>
                    <Head name="Tool2InUse" />
                  </Card>
                  <Card>
                    <Head name="HeatAdmissionTool2" open />
                    <CardBody $height={78}>
                      <IconCell><HistogramLogo /></IconCell>
                      <InputColumn rows={6} />
                      <FieldColumn
                        rows={6}
                        fields={[
                          ["Upper Border 00:", 35],
                          ["Upper Border 01:", 40],
                          ["Upper Border 02:", 45],
                          ["Upper Border 03:", 50],
                          ["Num Sections:", 4],
                          ["First Lower Border:", 30],
                        ]}
                      />
                      <Column $rows={6} $last>
                        <ResultRows results={[["Section", "4"]]} />
                        <Timings>
                          {timings.map(([text, level, full]) => (
                            <Timing key={text} $level={level} $full={full}>{text}</Timing>
                          ))}
                        </Timings>
                      </Column>
                    </CardBody>
                  </Card>
                  <Card>
                    <Head name="HeatAdmissionMinMax_Tool2" open />
                    <CardBody $height={66}>
                      <IconCell><MinMaxLogo /></IconCell>
                      <InputColumn rows={5} />
                      <Column $rows={5} />
                      <Column $rows={5} $last>
                        <ResultRows
                          results={[
                            ["Min", "20"],
                            ["Max", "45,913"],
                            ["Avg", "41,421"],
                            ["Time Min", "18.09.2019 12:22:01.326"],
                            ["Time Max", "18.09.2019 12:24:13.177"],
                          ]}
                        />
                      </Column>
                    </CardBody>
                  </Card>
                  <Card $blue>
                    <Head name="HeatAdmissionClassification_Tool2" open />
                    <CardBody $height={40}>
                      <IconCell><LampLogo /></IconCell>
                      <InputColumn rows={3} />
                      <FieldColumn
                        rows={3}
                        fields={[
                          ["Level OK / Warning:", 40],
                          ["Level Warning / Alarm:", 45],
                        ]}
                      />
                      <Column $rows={3} $last>
                        <ResultRows
                          results={[
                            ["Class", "3"],
                            ["Last Event Warni", "18.09.2019 12:22:46.513"],
                            ["Last Event Alarm", "18.09.2019 12:24:42.451"],
                          ]}
                        />
                      </Column>
                    </CardBody>
                  </Card>
                </Cards>
                <WorkbenchId>WB-ID: a6d1dec0-b58d-4330-86cc-d932fe5472e4</WorkbenchId>
              </Editor>

              <ChartDock>
                <Tabs>
                  <Tab type="button" $width={50}>
                    Project_2*
                    <Icon name="tabPin" size={5} />
                    <Icon name="close" size={5} />
                  </Tab>
                  <Spacer />
                  <Caret />
                </Tabs>
                <ChartPanel>
                  <ChartTabs>
                    <ChartTab type="button">YT Chart</ChartTab>
                    <Spacer />
                    <Icon name="scrollL" size={6} />
                    <Icon name="scrollR" size={6} />
                  </ChartTabs>
                  <InfoArea>
                    <InfoBar>
                      {info.map(([label, value]) => (
                        <Info key={label}>
                          <dt>{label}</dt>
                          <dd>{value}</dd>
                        </Info>
                      ))}
                    </InfoBar>
                    <PlayBar>
                      <Tools items="play" off />
                      <Tools items="pause" />
                      <TimeInput aria-label="Display width" defaultValue="0,00:02:40,399.000" />
                      <Tools items="first prev play last" off />
                      <TimeInput aria-label="Position" defaultValue="0,00:00:07,892.985" $off />
                      <Tools items="ccw cw hfit" off />
                      <Tools items="move" />
                      <Tools items="axisFit axisFit" off />
                      <Tools items="crossFit report exportUp |" />
                    </PlayBar>
                  </InfoArea>
                  <YtChart />
                </ChartPanel>
              </ChartDock>
            </Center>
            <Toolbox />
          </Workspace>

          <StatusBar>
            <Icon name="flag" />
            Ready
            <Spacer />
            <SourceControl type="button">
              <Icon name="arrowUp" size={6} />
              Add to Source Control
              <Icon name="scrollU" size={4} />
            </SourceControl>
          </StatusBar>
        </Window>
      </Page>
    </>
  );
};

export default App;
